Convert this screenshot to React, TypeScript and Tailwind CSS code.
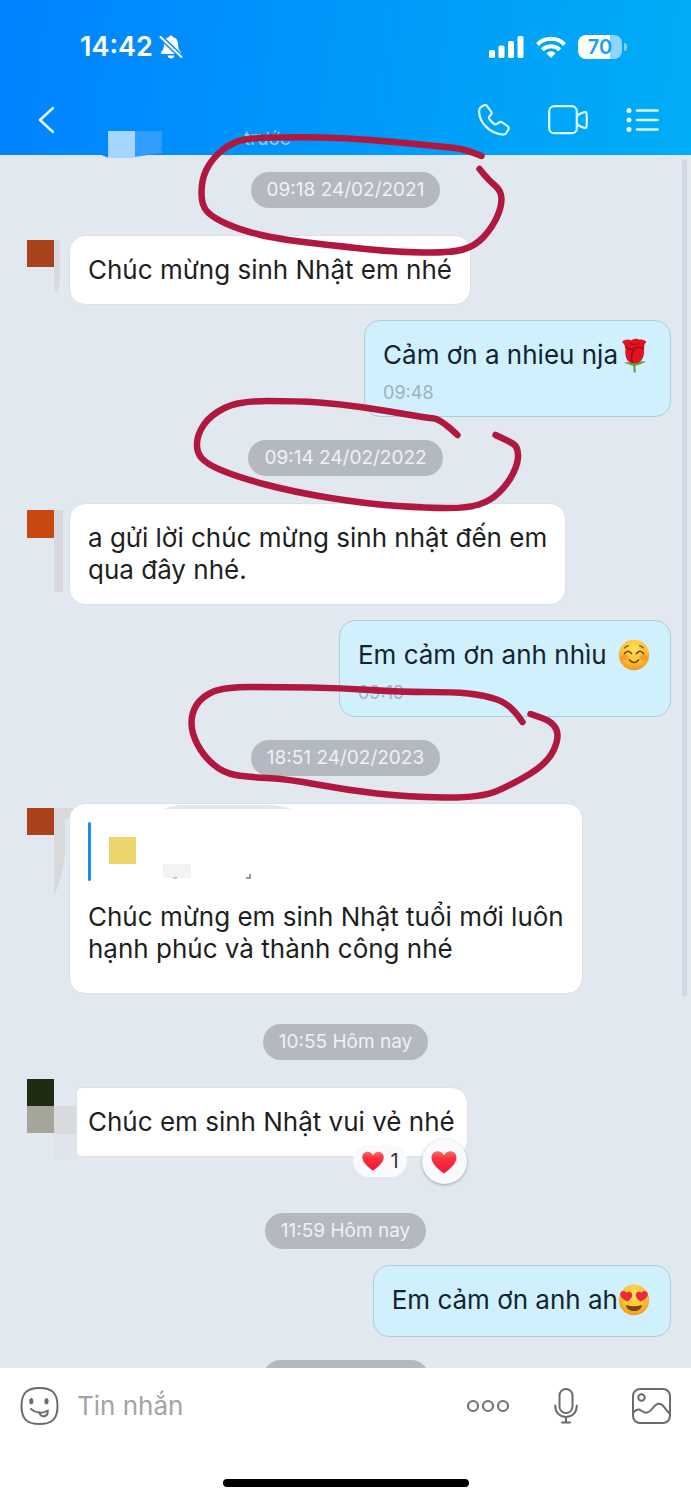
import { useState } from 'react';
import type { ReactNode } from 'react';
import clsx from 'clsx';

type Point = [number, number];

// Hand-drawn marker strokes, as lists of points
const MARKS: Point[][] = [
  [
    [481, 156], [464, 149], [445, 147], [395, 142], [345, 138], [300, 137], [245, 138], [226, 146],
    [210, 161], [201, 180], [201, 206], [213, 218], [240, 230], [277, 239], [346, 247], [395, 252],
    [450, 253], [475, 246], [492, 227], [501, 207], [501, 191], [488, 180], [479, 169],
  ],
  [
    [457, 435], [440, 419], [427, 418], [387, 411], [340, 404], [297, 401], [238, 401], [210, 415],
    [197, 434], [196, 452], [206, 464], [237, 477], [293, 492], [367, 504], [427, 508], [467, 508],
    [490, 501], [508, 483], [518, 462], [517, 447], [510, 442], [495, 435],
  ],
  [
    [522, 722], [510, 704], [483, 695], [453, 692], [400, 692], [340, 688], [280, 687], [223, 687],
    [201, 697], [191, 713], [191, 733], [203, 756], [223, 773], [247, 777], [287, 779], [346, 790],
    [407, 797], [480, 798], [513, 784], [547, 763], [559, 738], [553, 722], [530, 714],
  ],
];

// Joins the points with quadratic curves through their midpoints
function smoothPath(points: Point[]) {
  let d = `M${points[0][0]} ${points[0][1]}`;
  for (let i = 1; i < points.length - 1; i++) {
    const [x, y] = points[i];
    const [nx, ny] = points[i + 1];
    d += ` Q${x} ${y} ${(x + nx) / 2} ${(y + ny) / 2}`;
  }
  const last = points[points.length - 1];
  return `${d} L${last[0]} ${last[1]}`;
}

export default function App() {
  return (
    <div className="relative flex h-screen flex-col overflow-hidden bg-[#e2e8f0] font-[Inter,'Liberation_Sans',sans-serif]">
      <ChatHeader />
      <MessageList />
      <Composer />
      <MarkerOverlay />
    </div>
  );
}

function ChatHeader() {
  return (
    <header className="z-10 shrink-0 bg-[linear-gradient(97deg,#0082ff,#00aef6)] pt-[30px] text-white">
      {/* Status bar */}
      <div className="flex h-[34px] items-center justify-between pr-16 pl-20">
        <div className="flex items-center gap-1.5">
          <span className="text-[27px] leading-8 font-semibold">14:42</span>
          <BellOffIcon />
        </div>
        <div className="flex items-center gap-3">
          <SignalIcon />
          <WifiIcon />
          <div className="flex items-center gap-0.5">
            <span className="flex h-6 w-11 items-center justify-center rounded-lg bg-[linear-gradient(90deg,#fff_72%,#8fd6fd_72%)] text-xl leading-6 font-semibold text-[#139ff2]">
              70
            </span>
            <span className="h-2 w-[3px] rounded-r-full bg-[#7fd0fb]" />
          </div>
        </div>
      </div>

      {/* Navigation */}
      <div className="flex h-[91px] items-center pt-[21px] pr-8 pl-9">
        <button type="button" aria-label="Quay lại" className="shrink-0">
          <svg width="22" height="28" viewBox="0 0 22 28" fill="none" stroke="#e6f7ff" strokeWidth="2.4" strokeLinecap="round" strokeLinejoin="round">
            <path d="M17 2 4 14 17 26" />
          </svg>
        </button>
        <div className="flex min-w-0 flex-1 items-end self-end pl-[42px]">
          <svg className="h-6 w-[62px] shrink-0 overflow-visible" viewBox="0 0 62 24" aria-hidden="true">
            <path d="M0 23.5h9v3.5z" fill="#0087ff" />
            <path d="M35 0h27v22l-27 4z" fill="#2f9dff" />
            <path d="M8 0h27v27H8z" fill="#a5d6ff" />
          </svg>
          <p className="mb-1 ml-[82px] text-[19px] leading-6 text-[#8fcdff]">trước</p>
        </div>
        <div className="flex items-center gap-[38px]">
          <button type="button" aria-label="Gọi thoại">
            <PhoneIcon />
          </button>
          <button type="button" aria-label="Gọi video">
            <VideoIcon />
          </button>
          <button type="button" aria-label="Tuỳ chọn">
            <ListIcon />
          </button>
        </div>
      </div>
    </header>
  );
}

function MessageList() {
  return (
    <main className="relative flex min-h-0 flex-1 flex-col overflow-hidden pt-[17px]">
      <DateChip>09:18 24/02/2021</DateChip>
      <Incoming
        className="mt-[27px]"
        avatar={
          <>
            <path d="M27 5h6v30q0 20-4 23l-2-4z" fill="#d8d9de" />
            <path d="M0 5h27v27H0z" fill="#a9431d" />
          </>
        }
      >
        Chúc mừng sinh Nhật em nhé
      </Incoming>
      <Outgoing className="mt-[15px]" time="09:48">
        Cảm ơn a nhieu nja
        <Rose />
      </Outgoing>

      <DateChip className="mt-[23px]">09:14 24/02/2022</DateChip>
      <Incoming
        className="mt-[27px]"
        avatar={
          <>
            <path d="M27 7h9v82h-9z" fill="#d8d8de" />
            <path d="M0 7h27v28H0z" fill="#c94812" />
          </>
        }
      >
        a gửi lời chúc mừng sinh nhật đến em
        <br />
        qua đây nhé.
      </Incoming>
      <Outgoing className="mt-[15px]" time="09:19">
        Em cảm ơn anh nhìu <SmileFace />
      </Outgoing>

      <DateChip className="mt-[23px]">18:51 24/02/2023</DateChip>
      <Incoming
        className="mt-[27px]"
        bubbleClassName="pt-[18px] pr-[18px] pb-7 pl-[18px]"
        avatar={
          <>
            <path d="M27 5h26l-11 11-4 0V50q-2 24-11 43z" fill="#d8d9dc" />
            <path d="M0 5h27v27H0z" fill="#ac421b" />
          </>
        }
      >
        <QuotePreview />
        Chúc mừng em sinh Nhật tuổi mới luôn
        <br />
        hạnh phúc và thành công nhé
      </Incoming>

      <DateChip className="mt-[30px]">10:55 Hôm nay</DateChip>
      <Incoming
        className="mt-[27px]"
        bubbleClassName="ml-[7px] rounded-l-md py-[18px] pr-3 pl-[11px]"
        avatar={
          <>
            <path d="M27 19h22v28H27z" fill="#d9dadd" />
            <path d="M27 47h22v26H27z" fill="#dfe4ed" />
            <path d="M0-8h27v27H0z" fill="#202c12" />
            <path d="M0 19h27v27H0z" fill="#a5a699" />
          </>
        }
      >
        Chúc em sinh Nhật vui vẻ nhé
        <Reactions />
      </Incoming>

      <DateChip className="mt-14">11:59 Hôm nay</DateChip>
      <Outgoing className="mt-4">
        Em cảm ơn anh ah
        <HeartEyesFace />
      </Outgoing>
      <DateChip className="mt-[23px] w-[166px]" />

      {/* Scroll thumb */}
      <div className="absolute top-1 right-1 h-[838px] w-[5px] rounded-full bg-[#d3d9e2]" />
    </main>
  );
}

function DateChip({ children, className }: { children?: ReactNode; className?: string }) {
  return (
    <time
      className={clsx(
        'h-9 shrink-0 self-center rounded-full bg-[#b3b8c1] px-4 text-[19px] leading-9 text-[#eff2f6]',
        className
      )}
    >
      {children}
    </time>
  );
}

interface IncomingProps {
  avatar: ReactNode;
  children: ReactNode;
  className?: string;
  bubbleClassName?: string;
}

function Incoming({ avatar, children, className, bubbleClassName = 'p-[18px]' }: IncomingProps) {
  return (
    <div className={clsx('flex shrink-0 items-start pr-5 pl-[27px]', className)}>
      <svg className="h-px w-[42px] shrink-0 overflow-visible" aria-hidden="true">
        {avatar}
      </svg>
      <div
        className={clsx(
          'relative rounded-2xl border border-[#dce1e8] bg-white text-[26px] leading-8 text-[#1d1f22]',
          bubbleClassName
        )}
      >
        {children}
      </div>
    </div>
  );
}

function Outgoing({ time, children, className }: { time?: string; children: ReactNode; className?: string }) {
  return (
    <div
      className={clsx(
        'mr-5 ml-[27px] shrink-0 self-end rounded-2xl border border-[#aecddb] bg-[#d0f0fe] px-[18px] pt-[18px] text-[26px] leading-8 text-[#14242e]',
        time ? 'pb-[13px]' : 'pb-5',
        className
      )}
    >
      <p className="flex items-center whitespace-pre">{children}</p>
      {time && <p className="mt-3 text-lg leading-5 text-[#a0b0ba]">{time}</p>}
    </div>
  );
}

function QuotePreview() {
  return (
    <div className="mb-5 flex h-[59px] items-center">
      <span className="h-full w-[3px] rounded-full bg-[#1a8df2]" />
      <svg className="ml-[18px] h-[59px] w-[200px] overflow-visible" viewBox="0 0 200 59" aria-hidden="true">
        <path d="M0 15h27v27H0z" fill="#ecd46a" />
        <path d="M54 42h28v14H54z" fill="#f1f3f4" />
        <path d="M64 55.500q2 1.500 4 0" fill="none" stroke="#9a9a9a" />
        <path d="M137 56h4v-4" fill="none" stroke="#777" strokeWidth="1.500" />
        <path d="M56-13q6-4 20-4h80q16 0 26 4z" fill="#e4e6e9" />
      </svg>
    </div>
  );
}

function Reactions() {
  return (
    <>
      <button
        type="button"
        className="absolute right-[60px] -bottom-[21px] flex h-8 items-center gap-1.5 rounded-full bg-[#f8fafd] px-2 text-xl leading-8 text-[#333]"
      >
        <Heart className="h-6 w-6" />1
      </button>
      <button
        type="button"
        aria-label="Thả tim"
        className="absolute right-0 -bottom-7 flex h-[45px] w-[45px] items-center justify-center rounded-full bg-[#f8fafd] shadow-[0_1px_3px_#9aa3b1]"
      >
        <Heart className="h-7 w-7" />
      </button>
    </>
  );
}

function Composer() {
  const [text, setText] = useState('');

  return (
    <footer className="shrink-0 bg-white pt-4 pb-[13px]">
      <form className="flex h-11 items-center pr-5 pl-5" onSubmit={(e) => e.preventDefault()}>
        <button type="button" aria-label="Nhãn dán" className="shrink-0">
          <StickerIcon />
        </button>
        <input
          value={text}
          onChange={(e) => setText(e.target.value)}
          placeholder="Tin nhắn"
          aria-label="Tin nhắn"
          className="ml-[18px] min-w-0 flex-1 text-[26px] leading-8 text-[#1d1f22] outline-none placeholder:text-[#a2a4a8]"
        />
        <button type="button" aria-label="Thêm">
          <svg width="44" height="14" viewBox="0 0 44 14" fill="none" stroke="#737373" strokeWidth="2.2">
            <circle cx="7" cy="7" r="5" />
            <circle cx="22" cy="7" r="5" />
            <circle cx="37" cy="7" r="5" />
          </svg>
        </button>
        <button type="button" aria-label="Ghi âm" className="ml-11">
          <MicIcon />
        </button>
        <button type="button" aria-label="Gửi ảnh" className="ml-[54px]">
          <PhotoIcon />
        </button>
      </form>
      <div className="mx-auto mt-[51px] h-2 w-[246px] rounded-full bg-black" />
    </footer>
  );
}

function MarkerOverlay() {
  return (
    <svg
      className="pointer-events-none absolute top-0 left-1/2 z-20 h-[1500px] w-[691px] -translate-x-1/2"
      viewBox="0 0 691 1500"
      fill="none"
      stroke="#b0183f"
      strokeWidth="6.5"
      strokeLinecap="round"
      strokeLinejoin="round"
      aria-hidden="true"
    >
      {MARKS.map((points, i) => (
        <path key={i} d={smoothPath(points)} />
      ))}
    </svg>
  );
}

/* Icons */

function BellOffIcon() {
  return (
    <svg width="24" height="26" viewBox="0 0 24 26" fill="#fff" aria-hidden="true">
      <path d="M12 1.5c.9 0 1.7.6 1.9 1.5 3.4.9 5.2 3.7 5.2 7.2 0 4.800 1.100 5.900 2.600 7.500.9 1 .3 2.300-1 2.300H3.300c-1.300 0-1.900-1.300-1-2.300 1.500-1.600 2.600-2.700 2.600-7.500 0-3.500 1.800-6.300 5.200-7.200.2-.9 1-1.500 1.900-1.500z" />
      <path d="M8.500 21.500h7c-.4 1.900-1.700 3-3.500 3s-3.100-1.100-3.500-3z" />
      <path d="M1 2.500 23 23.500" stroke="#068dff" strokeWidth="5" />
      <path d="M1.500 3 22.500 23" stroke="#fff" strokeWidth="2" strokeLinecap="round" />
    </svg>
  );
}

function SignalIcon() {
  return (
    <svg width="35" height="22" viewBox="0 0 35 22" fill="#fff" aria-hidden="true">
      <rect x="0" y="14" width="6" height="8" rx="1.500" />
      <rect x="9.500" y="9.500" width="6" height="12.500" rx="1.500" />
      <rect x="19" y="5" width="6" height="17" rx="1.500" />
      <rect x="28.500" y="0" width="6" height="22" rx="1.500" />
    </svg>
  );
}

function WifiIcon() {
  return (
    <svg width="30" height="22" viewBox="0 0 30 22" fill="none" stroke="#fff" strokeWidth="4" aria-hidden="true">
      <path d="M1.500 8.500a19 19 0 0 1 27 0" />
      <path d="M6.300 13.800a12.300 12.300 0 0 1 17.400 0" />
      <path d="M15 22l-4.600-4.800a6.600 6.600 0 0 1 9.200 0z" fill="#fff" stroke="none" />
    </svg>
  );
}

function PhoneIcon() {
  return (
    <svg width="32" height="32" viewBox="0 0 32 32" fill="none" stroke="#dcfbff" strokeWidth="2.200" strokeLinejoin="round">
      <path d="M2.800 3.200 5.600 1.400C6.800.7 8.200 1 9 2.100l4 5.300c.8 1.100.7 2.500-.2 3.500l-1.300 1.400c-.7.8-.7 1.900-.1 2.800 1.300 1.900 3 3.600 4.900 4.900.9.600 2 .5 2.800-.1l1.600-1.300c1-.9 2.400-.9 3.500-.2l5.300 3.800c1.100.8 1.500 2.200.8 3.400l-1.600 2.900c-.7 1.300-2 2.100-3.500 2.100C11.800 29.800 1.300 18.600 1.100 7.400c0-1.700.5-3.300 1.700-4.200z" />
    </svg>
  );
}

function VideoIcon() {
  return (
    <svg width="40" height="30" viewBox="0 0 40 30" fill="none" stroke="#dcfbff" strokeWidth="2.200" strokeLinejoin="round">
      <rect x="1.200" y="1.200" width="27.600" height="27" rx="5" />
      <path d="M29 11.500l2.500-2.500 5-2c1-.4 2 .3 2 1.300.4 4.400.4 9.200 0 13.400 0 1-1 1.700-2 1.300l-5-2-2.500-2.500" />
    </svg>
  );
}

function ListIcon() {
  return (
    <svg width="33" height="26" viewBox="0 0 33 26" fill="#dcfbff" stroke="#dcfbff" strokeWidth="2.400" strokeLinecap="round">
      {[3.5, 13, 22.5].map((y) => (
        <g key={y}>
          <circle cx="3" cy={y} r="1.300" />
          <path d={`M11 ${y}h20.500`} />
        </g>
      ))}
    </svg>
  );
}

function StickerIcon() {
  return (
    <svg width="39" height="38" viewBox="0 0 39 38" fill="none" stroke="#6b6b6b" strokeWidth="2" strokeLinecap="round" strokeLinejoin="round">
      <path d="M19.500 1C32 1 37.500 6 37.500 19S32 37 19.500 37 1.500 32 1.500 19 7 1 19.500 1z" />
      <rect x="9.800" y="11.500" width="3" height="5.500" rx="1.500" fill="#6b6b6b" strokeWidth="1" />
      <rect x="25" y="11.500" width="3" height="5.500" rx="1.500" fill="#6b6b6b" strokeWidth="1" />
      <path d="M11 22c4.500 4 11 5 17 1.500" />
      <path d="M19.500 25.500c.5 3 3 4.500 5.500 3.500 2.300-.9 3-3 2.300-5" />
    </svg>
  );
}

function MicIcon() {
  return (
    <svg width="24" height="36" viewBox="0 0 24 36" fill="none" stroke="#6b6b6b" strokeWidth="2" strokeLinecap="round">
      <rect x="5.500" y="1" width="13" height="24" rx="6.500" />
      <path d="M1.200 17.500c0 7 4.600 11.500 10.800 11.500s10.800-4.500 10.800-11.500M12 29v5.500M8 34.500h8" />
    </svg>
  );
}

function PhotoIcon() {
  return (
    <svg width="39" height="36" viewBox="0 0 39 36" fill="none" stroke="#6b6b6b" strokeWidth="2" strokeLinejoin="round">
      <rect x="1" y="1" width="37" height="34" rx="7" />
      <circle cx="9.500" cy="9.500" r="3.200" />
      <path d="M1 25c2.500-3.500 5.500-4.500 8-2.500 4.500 3.500 8 2.500 11-1.500 5.500-7.500 9-6 12.500-1.500 2 2.800 3.500 5 5.500 6" />
    </svg>
  );
}

/* Emoji */

function Heart({ className }: { className?: string }) {
  return (
    <svg className={className} viewBox="0 0 28 28" aria-hidden="true">
      <defs>
        <linearGradient id="heart" x1="0" y1="0" x2="0" y2="1">
          <stop offset="0" stopColor="#f4705f" />
          <stop offset=".3" stopColor="#fb3340" />
          <stop offset="1" stopColor="#f01535" />
        </linearGradient>
      </defs>
      <path d="M14 25.500C9 21.500 1.500 16 1.500 9.700 1.500 6 4.200 3.300 7.600 3.300c2.800 0 5.200 1.500 6.400 4.200 1.200-2.700 3.600-4.200 6.400-4.200 3.400 0 6.100 2.700 6.100 6.400 0 6.300-7.500 11.800-12.500 15.800z" fill="url(#heart)" />
    </svg>
  );
}

function FaceBase() {
  return (
    <>
      <defs>
        <radialGradient id="face" cx=".5" cy=".32" r=".7">
          <stop offset="0" stopColor="#ffe25a" />
          <stop offset=".6" stopColor="#fdc231" />
          <stop offset="1" stopColor="#f0941c" />
        </radialGradient>
      </defs>
      <circle cx="16" cy="16" r="15.200" fill="url(#face)" />
    </>
  );
}

function SmileFace() {
  return (
    <svg className="mr-0.5 ml-1 h-8 w-8" viewBox="0 0 32 32" role="img" aria-label="☺️">
      <FaceBase />
      <ellipse cx="6.500" cy="18.500" rx="4" ry="3" fill="#f57a35" opacity=".55" />
      <ellipse cx="25.500" cy="18.500" rx="4" ry="3" fill="#f57a35" opacity=".55" />
      <g fill="none" stroke="#7a4210" strokeWidth="1.700" strokeLinecap="round">
        <path d="M6.500 14.500q3.500-4.500 7 0M18.500 14.500q3.500-4.500 7 0M11.500 21q4.500 5 9 0" />
        <path d="M6.500 9q1.500-2 4-2.200M25.500 9q-1.500-2-4-2.200" strokeWidth="1.200" />
      </g>
    </svg>
  );
}

function HeartEyesFace() {
  return (
    <svg className="mr-0.5 h-8 w-8" viewBox="0 0 32 32" role="img" aria-label="😍">
      <FaceBase />
      <path d="M8 21q8 2.500 16 0c-.5 4-4 6-8 6s-7.500-2-8-6z" fill="#7d4512" />
      <path d="M9.500 17.500C5.500 16 1.800 13.300 2.200 9.800c.4-3.300 4.700-3.900 6.300-1 2.500-2.200 6.300-.3 5.700 3-.4 2.300-2.600 4.200-4.700 5.700z" fill="#ec2a3f" />
      <path d="M22.500 17.500c4-1.500 7.700-4.200 7.300-7.700-.4-3.300-4.700-3.900-6.300-1-2.500-2.200-6.300-.3-5.700 3 .4 2.300 2.600 4.200 4.700 5.700z" fill="#ec2a3f" />
    </svg>
  );
}

function Rose() {
  return (
    <svg className="mr-0.5 h-8 w-8 overflow-visible" viewBox="0 0 32 32" role="img" aria-label="🌹">
      <path d="M15 22h2.200l.5 11.500h-2z" fill="#4ea52c" />
      <path d="M16 27c-3-.5-6-2.500-10-3 3-1.500 7-1.500 10 1.500 3-3 8-4 12-2.500-4 1-7 3.500-12 4z" fill="#5aa63a" />
      <path d="M4 3c3-3 7-3 9-1.500C16-.8 20-.5 21 .8c3-.8 6 .2 7.500 2.200-2 1.500-2.500 4-2.500 6 .8 8-1.500 15-9.500 15.500C9 24.500 6.500 18 7.500 9.500 7 6.500 6 4.500 4 3z" fill="#dc1420" />
      <path d="M7.500 8c3 2.500 7 3 9 1.500 2-1 6-1.500 9.500 0M16.500 9.500c-3 4-4 9-2 14" fill="none" stroke="#a30713" strokeWidth="1.400" />
      <path d="M12 3.500c2 2.500 6 3 9 0" fill="none" stroke="#b80d18" strokeWidth="1.200" />
    </svg>
  );
}
